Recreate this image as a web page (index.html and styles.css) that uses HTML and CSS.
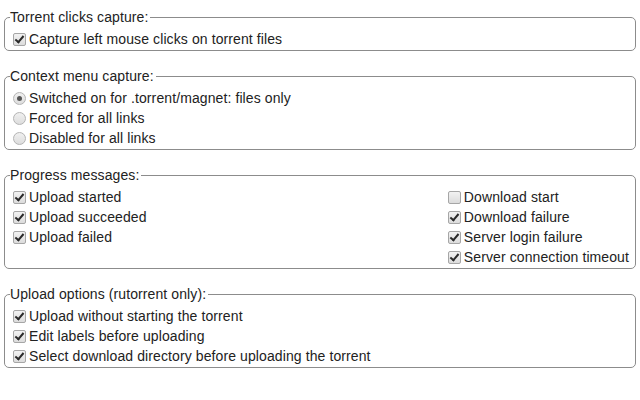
FILE: index.html
```html
<!DOCTYPE html>
<html lang="en">
<head>
    <meta charset="UTF-8">
    <title>Options</title>
    <link rel="stylesheet" href="styles.css">
</head>
<body>
    <fieldset>
        <legend>Torrent clicks capture:</legend>
        <label class="row"><input type="checkbox" checked> Capture left mouse clicks on torrent files</label>
    </fieldset>

    <fieldset>
        <legend>Context menu capture:</legend>
        <label class="row"><input type="radio" name="ctx" checked> Switched on for .torrent/magnet: files only</label>
        <label class="row"><input type="radio" name="ctx"> Forced for all links</label>
        <label class="row"><input type="radio" name="ctx"> Disabled for all links</label>
    </fieldset>

    <fieldset>
        <legend>Progress messages:</legend>
        <div class="cols">
            <div class="col">
                <label class="row"><input type="checkbox" checked> Upload started</label>
                <label class="row"><input type="checkbox" checked> Upload succeeded</label>
                <label class="row"><input type="checkbox" checked> Upload failed</label>
            </div>
            <div class="col">
                <label class="row"><input type="checkbox"> Download start</label>
                <label class="row"><input type="checkbox" checked> Download failure</label>
                <label class="row"><input type="checkbox" checked> Server login failure</label>
                <label class="row"><input type="checkbox" checked> Server connection timeout</label>
            </div>
        </div>
    </fieldset>

    <fieldset>
        <legend>Upload options (rutorrent only):</legend>
        <label class="row"><input type="checkbox" checked> Upload without starting the torrent</label>
        <label class="row"><input type="checkbox" checked> Edit labels before uploading</label>
        <label class="row"><input type="checkbox" checked> Select download directory before uploading the torrent</label>
    </fieldset>
</body>
</html>
```

FILE: styles.css
```css
body {
    font-family: 'Liberation Sans', Arial, sans-serif;
    font-size: 14px;
    letter-spacing: 0.1px;
    color: #222;
    background: #fff;
    margin: 0 4px;
    padding-top: 9px;
}

fieldset {
    border: 1px solid #8c8c8c;
    border-radius: 5px;
    margin: 0 0 17px 0;
    padding: 4px 6px 1px 7px;
}

legend {
    padding: 0 2px 0 0;
    margin-left: -2px;
    line-height: 16px;
}

.row {
    display: flex;
    align-items: center;
    height: 20px;
    white-space: nowrap;
}

.cols {
    display: flex;
    justify-content: space-between;
}

.col {
    display: flex;
    flex-direction: column;
}

input[type="checkbox"],
input[type="radio"] {
    appearance: none;
    -webkit-appearance: none;
    width: 13px;
    height: 13px;
    margin: 0 3px 0 1px;
    border: 1px solid #a6a6a6;
    background: linear-gradient(#f2f2f2, #dcdcdc);
    position: relative;
    flex: none;
}

input[type="checkbox"] {
    border-radius: 2px;
}

input[type="checkbox"]:checked::after {
    content: "";
    position: absolute;
    left: 3px;
    top: 0px;
    width: 3px;
    height: 7px;
    border: solid #2a2a2a;
    border-width: 0 2px 2px 0;
    transform: rotate(40deg);
}

input[type="radio"] {
    border-radius: 50%;
    border-color: #b4b4b4;
    background: linear-gradient(#f0f0f0, #dddddd);
}

input[type="radio"]:checked::after {
    content: "";
    position: absolute;
    left: 3px;
    top: 3px;
    width: 5px;
    height: 5px;
    border-radius: 50%;
    background: #555;
}
```
